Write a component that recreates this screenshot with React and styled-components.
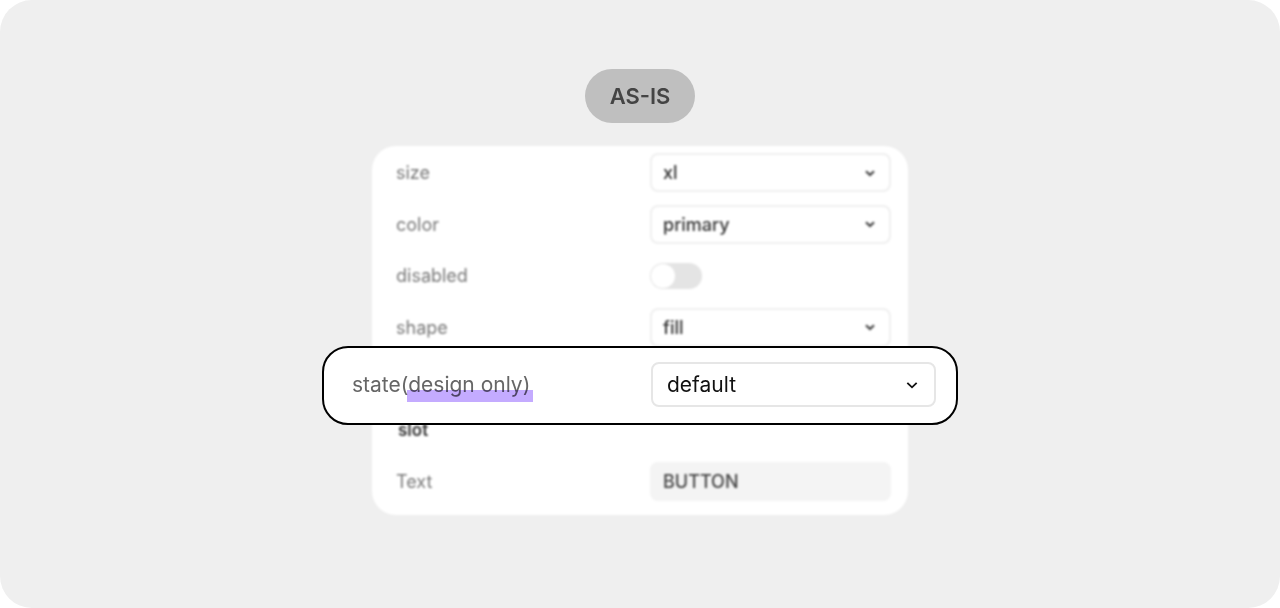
import React, { useState } from "react";
import styled, { createGlobalStyle } from "styled-components";

const fields = [
  { id: "size", type: "select", options: ["xl", "lg", "md", "sm"] },
  { id: "color", type: "select", options: ["primary", "secondary"] },
  { id: "disabled", type: "switch" },
  { id: "shape", type: "select", options: ["fill", "outline"] },
];

const Chevron = () => (
  <svg viewBox="0 0 12 12" aria-hidden="true">
    <path d="M2 4.2 6 8l4-3.8" />
  </svg>
);

const Dropdown = ({ id, options, large }) => (
  <SelectBox $large={large}>
    <select id={id} defaultValue={options[0]}>
      {options.map((option) => (
        <option key={option}>{option}</option>
      ))}
    </select>
    <Chevron />
  </SelectBox>
);

const App = () => {
  const [text, setText] = useState("BUTTON");

  return (
    <>
      <GlobalStyle />
      <Stage>
        <Badge>AS-IS</Badge>
        <PanelWrapper>
          <Panel>
            {fields.map((field) => (
              <Row key={field.id}>
                <Label htmlFor={field.id}>{field.id}</Label>
                {field.type === "select" ? (
                  <Dropdown id={field.id} options={field.options} />
                ) : (
                  <Switch id={field.id} type="checkbox" role="switch" />
                )}
              </Row>
            ))}
            {/* the callout covers this row */}
            <Row />
            <Row>
              <SlotTitle>slot</SlotTitle>
            </Row>
            <Row>
              <Label htmlFor="text">Text</Label>
              <TextInput
                id="text"
                value={text}
                onChange={(e) => setText(e.target.value)}
              />
            </Row>
          </Panel>
          <Callout>
            <CalloutLabel htmlFor="state">
              state<Marked>(design only)</Marked>
            </CalloutLabel>
            <Dropdown id="state" options={["default", "hover"]} large />
          </Callout>
        </PanelWrapper>
      </Stage>
    </>
  );
};

const GlobalStyle = createGlobalStyle`
  * {
    box-sizing: border-box;
  }

  body {
    margin: 0;
    background: #fff;
    font-family: Inter, "Liberation Sans", sans-serif;
  }

  input,
  select {
    font-family: inherit;
  }
`;

const Stage = styled.main`
  display: flex;
  flex-direction: column;
  align-items: center;
  gap: 23px;
  min-height: 100vh;
  padding: 69px 64px;
  border-radius: 32px;
  background: #efefef;
`;

const Badge = styled.div`
  padding: 12px 25px;
  border-radius: 27px;
  background: #bfbfbf;
  color: #444;
  font-size: 22px;
  font-weight: 600;
  line-height: 30px;
`;

const PanelWrapper = styled.div`
  position: relative;
  width: 100%;
  max-width: 536px;
`;

const Panel = styled.div`
  display: flex;
  flex-direction: column;
  justify-content: space-between;
  min-height: 369px;
  padding: 7px 17px 14px 24px;
  border-radius: 24px;
  background: #fff;
  filter: blur(1px);
`;

const Row = styled.div`
  display: grid;
  grid-template-columns: 1fr 241px;
  align-items: center;
  min-height: 39px;
`;

const Label = styled.label`
  padding-top: 1px;
  color: #777;
  font-size: 18px;
  line-height: 24px;
`;

const SlotTitle = styled.strong`
  padding-left: 2px;
  color: #333;
  font-size: 17px;
  font-weight: 600;
  line-height: 24px;
`;

const SelectBox = styled.div`
  position: relative;

  select {
    display: block;
    width: 100%;
    height: ${(p) => (p.$large ? "45px" : "39px")};
    padding: 0 ${(p) => (p.$large ? "14px" : "11px")};
    appearance: none;
    border: 2px solid ${(p) => (p.$large ? "#e6e6e6" : "#efefef")};
    border-radius: 8px;
    background: #fff;
    color: ${(p) => (p.$large ? "#111" : "#333")};
    font-size: ${(p) => (p.$large ? "21px" : "18px")};
    font-weight: ${(p) => (p.$large ? 400 : 500)};
  }

  svg {
    position: absolute;
    top: 50%;
    right: ${(p) => (p.$large ? "17px" : "15px")};
    width: ${(p) => (p.$large ? "14px" : "12px")};
    transform: translateY(-50%);
    fill: none;
    stroke: ${(p) => (p.$large ? "#111" : "#444")};
    stroke-width: ${(p) => (p.$large ? 1.6 : 2.2)};
    pointer-events: none;
  }
`;

const Switch = styled.input`
  width: 52px;
  height: 26px;
  margin: 0;
  padding: 1px;
  appearance: none;
  border-radius: 13px;
  background: #e4e4e4;

  &::before {
    content: "";
    display: block;
    width: 24px;
    height: 24px;
    border-radius: 50%;
    background: #fff;
  }

  &:checked::before {
    margin-left: auto;
  }
`;

const TextInput = styled.input`
  width: 100%;
  height: 39px;
  padding: 0 13px;
  border: 0;
  border-radius: 8px;
  background: #f4f4f4;
  color: #444;
  font-size: 18px;
  font-weight: 500;
`;

const Callout = styled.div`
  position: absolute;
  top: 200px;
  right: -50px;
  left: -50px;
  display: grid;
  grid-template-columns: 1fr 285px;
  align-items: center;
  padding: 14px 20px 16px 28px;
  border: 2px solid #000;
  border-radius: 26px;
  background: #fff;
`;

const CalloutLabel = styled.label`
  color: #666;
  font-size: 21px;
  line-height: 28px;
`;

const Marked = styled.span`
  position: relative;

  &::after {
    content: "";
    position: absolute;
    right: -3px;
    bottom: -5px;
    left: 6px;
    height: 12px;
    background: #c4abff;
    mix-blend-mode: multiply;
  }
`;

export default App;
